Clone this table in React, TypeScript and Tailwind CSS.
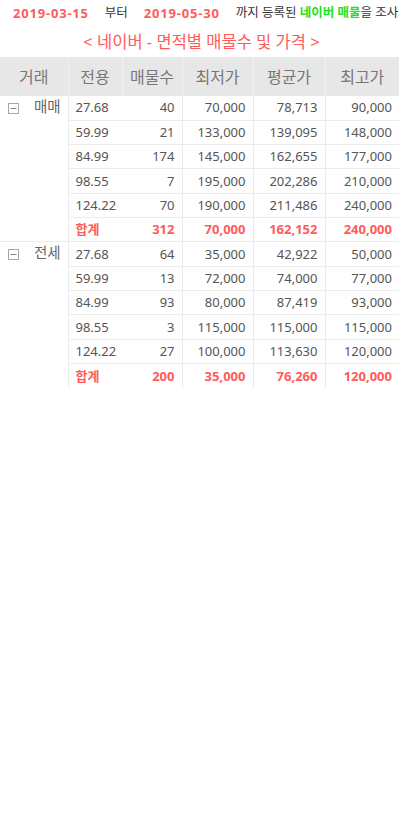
import React from "react";

type Row = { area: string; count: number; min: string; avg: string; max: string };

const groups: { name: string; rows: Row[]; total: { count: number; min: string; avg: string; max: string } }[] = [
  {
    name: "매매",
    rows: [
      { area: "27.68", count: 40, min: "70,000", avg: "78,713", max: "90,000" },
      { area: "59.99", count: 21, min: "133,000", avg: "139,095", max: "148,000" },
      { area: "84.99", count: 174, min: "145,000", avg: "162,655", max: "177,000" },
      { area: "98.55", count: 7, min: "195,000", avg: "202,286", max: "210,000" },
      { area: "124.22", count: 70, min: "190,000", avg: "211,486", max: "240,000" },
    ],
    total: { count: 312, min: "70,000", avg: "162,152", max: "240,000" },
  },
  {
    name: "전세",
    rows: [
      { area: "27.68", count: 64, min: "35,000", avg: "42,922", max: "50,000" },
      { area: "59.99", count: 13, min: "72,000", avg: "74,000", max: "77,000" },
      { area: "84.99", count: 93, min: "80,000", avg: "87,419", max: "93,000" },
      { area: "98.55", count: 3, min: "115,000", avg: "115,000", max: "115,000" },
      { area: "124.22", count: 27, min: "100,000", avg: "113,630", max: "120,000" },
    ],
    total: { count: 200, min: "35,000", avg: "76,260", max: "120,000" },
  },
];

const MinusBox = () => (
  <svg width="11" height="11" viewBox="0 0 11 11" className="shrink-0">
    <rect x="0.5" y="0.5" width="10" height="10" fill="white" stroke="#a8a8a8" />
    <path d="M2.5 5.5h6" stroke="#888" strokeWidth="1" />
  </svg>
);

export default function App() {
  const cell = "h-[24.33px] p-0 leading-none";
  return (
    <div
      className="w-[403px] min-h-[826px] bg-white text-[#555]"
      style={{ fontFamily: "'Noto Sans', 'Noto Sans CJK KR', sans-serif" }}
    >
      {/* 조사 기간 */}
      <div className="flex items-center h-[27px] pl-[13px] text-[12.5px] whitespace-nowrap">
        <span className="text-[13px] font-bold tracking-[0.8px] text-[#ff5b5b]">2019-03-15</span>
        <span className="ml-[16px] text-[#333]">부터</span>
        <span className="ml-[16px] text-[13px] font-bold tracking-[0.8px] text-[#ff5b5b]">2019-05-30</span>
        <span className="ml-[16px] text-[#333]">
          까지 등록된 <b className="text-[#22e022]">네이버 매물</b>을 조사
        </span>
      </div>
      {/* 제목 */}
      <div className="h-[30px] flex items-center justify-center text-[16.5px] text-[#ff5b5b]">
        &lt; 네이버 - 면적별 매물수 및 가격 &gt;
      </div>
      <table className="w-[399px] border-collapse table-fixed">
        <colgroup>
          <col className="w-[68px]" />
          <col className="w-[54px]" />
          <col className="w-[60px]" />
          <col className="w-[71px]" />
          <col className="w-[72px]" />
          <col className="w-[74px]" />
        </colgroup>
        <thead>
          <tr className="h-[39px] bg-[#e7e7e7] text-[16px] font-normal text-[#777]">
            <th className="font-normal">거래</th>
            <th className="font-normal border-l border-[#f1f1f1]">전용</th>
            <th className="font-normal border-l border-[#f1f1f1]">매물수</th>
            <th className="font-normal border-l border-[#f1f1f1]">최저가</th>
            <th className="font-normal border-l border-[#f1f1f1]">평균가</th>
            <th className="font-normal border-l border-[#f1f1f1]">최고가</th>
          </tr>
        </thead>
        <tbody className="text-[13px]">
          {groups.map((g, gi) => (
            <React.Fragment key={g.name}>
              {g.rows.map((r, i) => (
                <tr
                  key={r.area}
                  className={i === 0 && gi > 0 ? "border-t border-[#ececec]" : i > 0 ? "border-t border-[#ececec]" : ""}
                >
                  {i === 0 && (
                    <td rowSpan={6} className="p-0 align-top border-r border-[#ececec]">
                      <div className="flex items-center h-[24px] pl-[8px] gap-[15px] text-[14.5px] text-[#666]">
                        <MinusBox />
                        <span className="-mt-[3px]">{g.name}</span>
                      </div>
                    </td>
                  )}
                  <td className={`${cell} pl-[7px] text-left`}>{r.area}</td>
                  <td className={`${cell} pr-[7px] text-right`}>{r.count}</td>
                  <td className={`${cell} pr-[7px] text-right border-l border-[#ececec]`}>{r.min}</td>
                  <td className={`${cell} pr-[7px] text-right border-l border-[#ececec]`}>{r.avg}</td>
                  <td className={`${cell} pr-[7px] text-right border-l border-[#ececec]`}>{r.max}</td>
                </tr>
              ))}
              <tr className="border-t border-[#ececec] font-bold text-[#ff5b5b]">
                <td className={`${cell} pl-[7px] text-left`}>합계</td>
                <td className={`${cell} pr-[7px] text-right`}>{g.total.count}</td>
                <td className={`${cell} pr-[7px] text-right border-l border-[#ececec]`}>{g.total.min}</td>
                <td className={`${cell} pr-[7px] text-right border-l border-[#ececec]`}>{g.total.avg}</td>
                <td className={`${cell} pr-[7px] text-right border-l border-[#ececec]`}>{g.total.max}</td>
              </tr>
            </React.Fragment>
          ))}
        </tbody>
      </table>
    </div>
  );
}
